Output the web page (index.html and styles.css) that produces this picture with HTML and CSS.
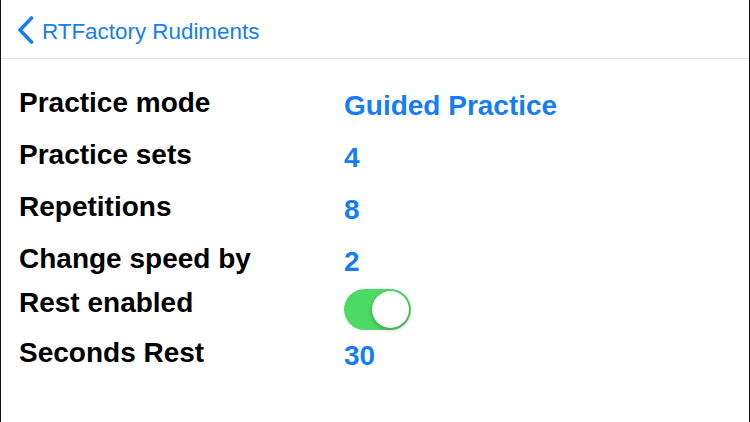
FILE: index.html
```html
<!DOCTYPE html>
<html>
<head>
<meta charset="utf-8">
<link rel="stylesheet" href="styles.css">
</head>
<body>
<div class="screen">
  <header class="nav">
    <a class="back">
      <svg class="chev" width="17" height="28" viewBox="0 0 17 28"><path d="M14.5 2 L3 14 L14.5 26" fill="none" stroke="#157ef2" stroke-width="3.6" stroke-linecap="round" stroke-linejoin="round"/></svg>
      <span class="back-title">RTFactory Rudiments</span>
    </a>
  </header>
  <main class="list">
    <div class="row"><div class="label">Practice mode</div><div class="value">Guided Practice</div></div>
    <div class="row"><div class="label">Practice sets</div><div class="value">4</div></div>
    <div class="row"><div class="label">Repetitions</div><div class="value">8</div></div>
    <div class="row row-short"><div class="label">Change speed by</div><div class="value">2</div></div>
    <div class="row row-mid"><div class="label">Rest enabled</div><div class="value value-switch"><span class="switch"><span class="knob"></span></span></div></div>
    <div class="row"><div class="label">Seconds Rest</div><div class="value">30</div></div>
  </main>
</div>
</body>
</html>
```
FILE: styles.css
```css
html, body {
  margin: 0;
  padding: 0;
  background: #fff;
}
.screen {
  width: 748px;
  height: 422px;
  border-left: 1px solid #111;
  border-right: 1px solid #111;
  overflow: hidden;
  font-family: "Liberation Sans", Arial, sans-serif;
}
.nav {
  height: 58px;
  border-bottom: 1px solid #e0e0e0;
  display: flex;
  align-items: flex-start;
}
.back {
  display: flex;
  align-items: flex-start;
  padding-left: 16px;
  padding-top: 16px;
  color: #157ef2;
}
.chev {
  display: block;
}
.back-title {
  font-size: 22.4px;
  line-height: 30px;
  margin-left: 8px;
  margin-top: 1px;
}
.list {
  padding-top: 18px;
}
.row {
  display: grid;
  grid-template-columns: 343px auto;
  height: 52px;
  line-height: 52px;
  font-size: 28px;
  font-weight: bold;
}
.row-short { height: 44px; }
.row-mid { height: 50px; }
.label {
  padding-left: 18px;
  color: #000;
}
.value {
  color: #157ef2;
  padding-top: 3px;
  height: 49px;
}
.value-switch {
  padding-top: 12px;
}
.switch {
  display: block;
  width: 67px;
  height: 41px;
  border-radius: 21px;
  background: #4cd964;
  position: relative;
}
.knob {
  position: absolute;
  right: 2px;
  top: 2px;
  width: 37px;
  height: 37px;
  border-radius: 50%;
  background: #fff;
  box-shadow: 0 2px 4px rgba(0,0,0,0.25), 0 0 1px rgba(0,0,0,0.15);
}
```
